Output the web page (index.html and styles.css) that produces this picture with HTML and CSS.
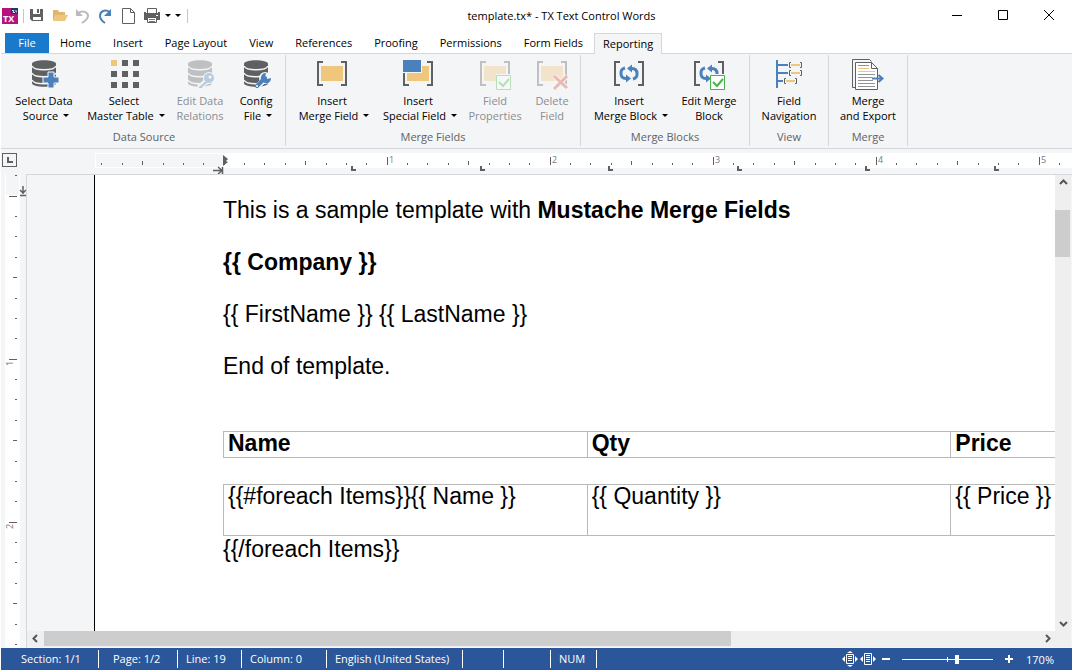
FILE: index.html
```html
<!DOCTYPE html>
<html lang="en">
<head>
    <meta charset="utf-8">
    <title>template.tx* - TX Text Control Words</title>
    <link rel="stylesheet" href="styles.css">
</head>
<body>
    <!-- shared icon parts -->
    <svg class="defs" width="0" height="0">
        <symbol id="database" viewBox="0 0 32 32">
            <path d="M4 5c0-5 24-5 24 0v19c0 5-24 5-24 0z" fill="#5f6062"/>
            <path d="M4 7c2 5 22 5 24 0M4 14c2 5 22 5 24 0M4 21c2 5 22 5 24 0" fill="none" stroke="#f4f5f7" stroke-width="1.4"/>
        </symbol>
        <symbol id="brackets" viewBox="0 0 32 32">
            <path d="M7 3H2v23h5M25 3h5v23h-5" fill="none" stroke="#5f6062" stroke-width="2"/>
        </symbol>
        <symbol id="cycle" viewBox="0 0 32 32">
            <path d="M12 9c-4 1-4 3-4 5.500s1 5 5 5M20 20c4-1 4-3 4-5.500s-1-5-5-5" fill="none" stroke="#4a80bb" stroke-width="3"/>
            <path d="M13 15.500v8l5-4zM19 5.500v8l-5-4z" fill="#4a80bb"/>
        </symbol>
    </svg>

    <div class="app">
        <header class="titlebar">
            <div class="quick-access">
                <svg class="app-icon" width="18" height="18" viewBox="0 0 18 18">
                    <path d="M1 1h10l6 6v10H1z" fill="#b5127d"/>
                    <path d="M10 1h7v6h-7z" fill="#24356b"/>
                    <path d="M11 3.500h2l-1 2h2M15 3v2h1" fill="none" stroke="#c9d3ea"/>
                    <text x="2" y="15" class="app-icon-text">TX</text>
                </svg>
                <span class="divider"></span>
                <button class="quick" aria-label="Save"><svg width="16" height="16" viewBox="0 0 16 16"><path d="M1 1h13v12H3l-2-2z" fill="#5f6062"/><path d="M4 1h7v5H4zM4 9h8v3H4z" fill="#fff"/><path d="M8 1h2v4H8z" fill="#5f6062"/></svg></button>
                <button class="quick" aria-label="Open"><svg width="16" height="16" viewBox="0 0 16 16"><path d="M1 13V2h5l1 2h6v3H4z" fill="#dfb66c"/><path d="M4 7h12l-3 6H1z" fill="#efc77c"/></svg></button>
                <button class="quick" aria-label="Undo"><svg width="16" height="16" viewBox="0 0 16 16"><path d="M3 5c5-3 10-1 10 3 0 3-3 5-6 7" fill="none" stroke="#b9bbbe" stroke-width="2"/><path d="M1 1v7h7z" fill="#b9bbbe"/></svg></button>
                <button class="quick" aria-label="Redo"><svg width="16" height="16" viewBox="0 0 16 16"><path d="M12 4C7 1 2 3 2 8c0 3 2 5 5 7" fill="none" stroke="#4a80bb" stroke-width="2"/><path d="M13 1v7H6z" fill="#4a80bb"/></svg></button>
                <button class="quick" aria-label="New"><svg width="16" height="16" viewBox="0 0 16 16"><path d="M1.500.5h8l4 4v11h-12zM9.500.5v4h4" fill="#fff" stroke="#5f6062"/></svg></button>
                <button class="quick" aria-label="Print"><svg width="16" height="16" viewBox="0 0 16 16"><path d="M3.500 5V.5h9V5" fill="#fff" stroke="#5f6062"/><path d="M0 4h2v1h12V4h2v8H0z" fill="#5f6062"/><path d="M12 7h2v1h-2z" fill="#fff"/><path d="M3.500 9.500h9v5h-9z" fill="#fff" stroke="#5f6062"/><path d="M5 11.500h6M5 13.500h6" stroke="#4a80bb"/></svg></button>
                <button class="quick-menu" aria-label="Print options"><span class="caret"></span></button>
                <button class="quick-menu" aria-label="Customize"><span class="caret"></span></button>
                <span class="divider"></span>
            </div>
            <div class="title">template.tx* - TX Text Control Words</div>
            <div class="window-buttons">
                <button aria-label="Minimize"><svg width="12" height="12" viewBox="0 0 12 12"><path d="M1 5.500h10" stroke="#000"/></svg></button>
                <button aria-label="Maximize"><svg width="12" height="12" viewBox="0 0 12 12"><path d="M1.500.5h9v9h-9z" fill="none" stroke="#000"/></svg></button>
                <button aria-label="Close"><svg width="12" height="12" viewBox="0 0 12 12"><path d="M1 0l10 10M11 0L1 10" stroke="#000"/></svg></button>
            </div>
        </header>

        <nav class="tabs">
            <button class="tab file">File</button>
            <button class="tab">Home</button>
            <button class="tab">Insert</button>
            <button class="tab">Page Layout</button>
            <button class="tab">View</button>
            <button class="tab">References</button>
            <button class="tab">Proofing</button>
            <button class="tab">Permissions</button>
            <button class="tab">Form Fields</button>
            <button class="tab active">Reporting</button>
        </nav>

        <div class="ribbon">
            <section class="group">
                <div class="commands">
                    <button class="command w-72">
                        <svg width="32" height="32" viewBox="0 0 32 32"><use href="#database"/><path d="M20 13h6v5h5v6h-5v5h-6v-5h-5v-6h5z" fill="#4a80bb" stroke="#f4f5f7"/></svg>
                        <span>Select Data</span><span class="more">Source<i class="caret"></i></span>
                    </button>
                    <button class="command w-88">
                        <svg width="32" height="32" viewBox="0 0 32 32"><path d="M3 1h6v6H3z" fill="#efc77c"/><path d="M14 1h6v6h-6zM25 1h6v6h-6zM3 12h6v6H3zM14 12h6v6h-6zM25 12h6v6h-6zM3 23h6v6H3zM14 23h6v6h-6zM25 23h6v6h-6z" fill="#5f6062"/></svg>
                        <span>Select</span><span class="more">Master Table<i class="caret"></i></span>
                    </button>
                    <button class="command w-64" disabled>
                        <svg width="32" height="32" viewBox="0 0 32 32"><use href="#database"/><path d="M24 21l-9 8" stroke="#f4f5f7" stroke-width="6"/><circle cx="25" cy="19" r="6" fill="#f4f5f7"/><path d="M23 21l-8 7v1h3l1-2 2-1 4-4" fill="#4a80bb"/><circle cx="25" cy="19" r="5" fill="#4a80bb"/><circle cx="26" cy="18" r="1.500" fill="#fff"/></svg>
                        <span>Edit Data</span><span>Relations</span>
                    </button>
                    <button class="command w-48">
                        <svg width="32" height="32" viewBox="0 0 32 32"><use href="#database"/><path d="M17 28l9-9" stroke="#f4f5f7" stroke-width="6"/><circle cx="25" cy="19" r="6" fill="#f4f5f7"/><path d="M17 27l8-8" stroke="#4a80bb" stroke-width="4" stroke-linecap="round"/><path d="M26 14l-1 4 2 2 4-1c0 4-3 6-6 5s-5-3-4-6 2-4 5-4z" fill="#4a80bb"/><circle cx="17" cy="27" r="1" fill="#fff"/></svg>
                        <span>Config</span><span class="more">File<i class="caret"></i></span>
                    </button>
                </div>
                <div class="group-label">Data Source</div>
            </section>

            <section class="group">
                <div class="commands">
                    <button class="command w-84">
                        <svg width="32" height="32" viewBox="0 0 32 32"><use href="#brackets"/><path d="M5 7h22v15H5z" fill="#efc77c"/></svg>
                        <span>Insert</span><span class="more">Merge Field<i class="caret"></i></span>
                    </button>
                    <button class="command w-88">
                        <svg width="32" height="32" viewBox="0 0 32 32"><use href="#brackets"/><path d="M5 7h22v15H5z" fill="#efc77c"/><path d="M0 0h20v14H0z" fill="#f4f5f7"/><path d="M1 1h18v12H1z" fill="#4a80bb"/></svg>
                        <span>Insert</span><span class="more">Special Field<i class="caret"></i></span>
                    </button>
                    <button class="command w-66" disabled>
                        <svg width="32" height="32" viewBox="0 0 32 32"><use href="#brackets"/><path d="M5 7h22v15H5z" fill="#efc77c"/><path d="M17 15h16v16H17z" fill="#f4f5f7"/><path d="M17.500 16.500h14v14h-14z" fill="#fff" stroke="#45b549"/><path d="M20 23l4 4 6-7" fill="none" stroke="#45b549" stroke-width="2"/></svg>
                        <span>Field</span><span>Properties</span>
                    </button>
                    <button class="command w-48" disabled>
                        <svg width="32" height="32" viewBox="0 0 32 32"><use href="#brackets"/><path d="M5 7h22v15H5z" fill="#efc77c"/><path d="M18 17l13 12M31 17L18 30" stroke="#f4f5f7" stroke-width="5"/><path d="M18 17l13 12M31 17L18 30" stroke="#dc4a38" stroke-width="3"/></svg>
                        <span>Delete</span><span>Field</span>
                    </button>
                </div>
                <div class="group-label">Merge Fields</div>
            </section>

            <section class="group">
                <div class="commands">
                    <button class="command w-88">
                        <svg width="32" height="32" viewBox="0 0 32 32"><use href="#brackets"/><use href="#cycle"/></svg>
                        <span>Insert</span><span class="more">Merge Block<i class="caret"></i></span>
                    </button>
                    <button class="command w-72">
                        <svg width="32" height="32" viewBox="0 0 32 32"><use href="#brackets"/><use href="#cycle"/><path d="M17 15h16v16H17z" fill="#f4f5f7"/><path d="M17.500 16.500h14v14h-14z" fill="#fff" stroke="#45b549"/><path d="M20 23l4 4 6-7" fill="none" stroke="#45b549" stroke-width="2"/></svg>
                        <span>Edit Merge</span><span>Block</span>
                    </button>
                </div>
                <div class="group-label">Merge Blocks</div>
            </section>

            <section class="group">
                <div class="commands">
                    <button class="command w-70">
                        <svg width="32" height="32" viewBox="0 0 32 32"><path d="M4 1v28M4 6h11M4 14h11M4 22h6" fill="none" stroke="#4a80bb" stroke-width="2"/><path d="M18 3.500h-1.500v5H18M27 3.500h1.500v5H27M18 11.500h-1.500v5H18M27 11.500h1.500v5H27M13 19.500h-1.500v5H13M22 19.500h1.500v5H22" fill="none" stroke="#5f6062"/><path d="M18 6h9M18 14h9M13 22h9" stroke="#efc77c" stroke-width="2"/></svg>
                        <span>Field</span><span>Navigation</span>
                    </button>
                </div>
                <div class="group-label">View</div>
            </section>

            <section class="group">
                <div class="commands">
                    <button class="command w-70">
                        <svg width="32" height="32" viewBox="0 0 32 32"><path d="M3 28.500H.5V.5h17l2 2" fill="none" stroke="#5f6062"/><path d="M3.500 3.500h16l6 6v21h-22z" fill="#fff" stroke="#5f6062"/><path d="M19.500 3.500v6h6" fill="none" stroke="#5f6062"/><path d="M6 6.500h11M6 15.500h17M6 18.500h14M6 21.500h15M6 24.500h17M6 27.500h17" stroke="#919294"/><path d="M6 9.500h11M6 12.500h17" stroke="#efc77c"/><path d="M20 19.500h10M26.500 16l4 3.500-4 3.500" fill="none" stroke="#4a80bb" stroke-width="2"/></svg>
                        <span>Merge</span><span>and Export</span>
                    </button>
                </div>
                <div class="group-label">Merge</div>
            </section>
        </div>

        <div class="ruler-row">
            <button class="tab-type" aria-label="Left tab"><svg width="6" height="6" viewBox="0 0 6 6"><path d="M1 0v5h5" fill="none" stroke="#5f6062" stroke-width="2"/></svg></button>
            <svg class="ruler-h" height="25" width="100%">
                <defs>
                    <pattern id="inch-h" x="129" y="0" width="163" height="25" patternUnits="userSpaceOnUse">
                        <path d="M.5 8v8M20.500 14v2M40.500 14v2M61.500 14v2M81.500 12v4M102.500 14v2M122.500 14v2M142.500 14v2" stroke="#5f6062"/>
                    </pattern>
                </defs>
                <rect x="0" y="4" width="100%" height="15" fill="#fff"/>
                <rect x="1" y="5" width="127" height="13" fill="#f4f5f7"/>
                <rect x="0" y="0" width="100%" height="25" fill="url(#inch-h)"/>
                <path d="M128 6l5 4-2 2 2 1-5 4z" fill="#5f6062"/>
                <path d="M118 21.500h8M123 18l4 3.500-4 3.500M127.500 18v7" fill="none" stroke="#5f6062" stroke-width="1.500"/>
                <g class="ruler-text"><text x="294" y="14">1</text><text x="457" y="14">2</text><text x="620" y="14">3</text><text x="783" y="14">4</text><text x="946" y="14">5</text></g>
                <path d="M257 17v4h4M386 17v4h4M514 17v4h4M643 17v4h4M771 17v4h4M900 17v4h4" fill="none" stroke="#5f6062" stroke-width="2"/>
            </svg>
        </div>

        <main class="workspace">
            <svg class="ruler-v" width="25" height="100%">
                <defs>
                    <pattern id="inch-v" x="0" y="22" width="25" height="163" patternUnits="userSpaceOnUse">
                        <path d="M8 .5h8M14 20.500h2M14 40.500h2M14 61.500h2M12 81.500h4M14 102.500h2M14 122.500h2M14 142.500h2" stroke="#5f6062"/>
                    </pattern>
                </defs>
                <rect x="4" y="0" width="15" height="100%" fill="#fff"/>
                <rect x="5" y="0" width="13" height="21" fill="#f4f5f7"/>
                <rect x="0" y="0" width="25" height="100%" fill="url(#inch-v)"/>
                <path d="M22 12v8M19 16l3 3 3-3M19 21.500h6" fill="none" stroke="#5f6062" stroke-width="1.500"/>
                <g class="ruler-text"><text transform="translate(12 192) rotate(-90)">1</text><text transform="translate(12 355) rotate(-90)">2</text></g>
            </svg>
            <div class="view">
                <div class="canvas">
                    <article class="page">
                        <p>This is a sample template with <b>Mustache Merge Fields</b></p>
                        <p><b>{{ Company }}</b></p>
                        <p>{{ FirstName }} {{ LastName }}</p>
                        <p>End of template.</p>
                        <table class="header-table">
                            <tr><th>Name</th><th>Qty</th><th>Price</th></tr>
                        </table>
                        <table class="item-table">
                            <tr><td>{{#foreach Items}}{{ Name }}</td><td>{{ Quantity }}</td><td>{{ Price }}</td></tr>
                        </table>
                        <p>{{/foreach Items}}</p>
                    </article>
                </div>
                <div class="scroll scroll-v">
                    <button aria-label="Scroll up"><svg width="9" height="9" viewBox="0 0 9 9"><path d="M1 6l3.500-3.500L8 6" fill="none" stroke="#55575a" stroke-width="2"/></svg></button>
                    <div class="track"><div class="thumb"></div></div>
                    <button aria-label="Scroll down"><svg width="9" height="9" viewBox="0 0 9 9"><path d="M1 3l3.500 3.500L8 3" fill="none" stroke="#55575a" stroke-width="2"/></svg></button>
                </div>
                <div class="scroll scroll-h">
                    <button aria-label="Scroll left"><svg width="9" height="9" viewBox="0 0 9 9"><path d="M6 1L2.500 4.500 6 8" fill="none" stroke="#55575a" stroke-width="2"/></svg></button>
                    <div class="track"><div class="thumb"></div></div>
                    <button aria-label="Scroll right"><svg width="9" height="9" viewBox="0 0 9 9"><path d="M3 1l3.500 3.500L3 8" fill="none" stroke="#55575a" stroke-width="2"/></svg></button>
                </div>
                <div class="scroll-corner"></div>
            </div>
        </main>

        <footer class="statusbar">
            <div class="cell section">Section: 1/1</div>
            <div class="cell page-count">Page: 1/2</div>
            <div class="cell">Line: 19</div>
            <div class="cell">Column: 0</div>
            <div class="cell">English (United States)</div>
            <div class="cell"></div>
            <div class="cell"></div>
            <div class="cell">NUM</div>
            <div class="zoom">
                <button aria-label="Whole page"><svg width="16" height="16" viewBox="0 0 16 16"><path d="M4.500 3.500h7v9h-7z" fill="none" stroke="#fff"/><path d="M6 5.500h4M6 7.500h4M6 9.500h4" stroke="#fff"/><path d="M8 0l3 2H5zM8 16l3-2H5zM0 8l3-3v6zM16 8l-3-3v6z" fill="#fff"/></svg></button>
                <button aria-label="Page width"><svg width="16" height="16" viewBox="0 0 16 16"><path d="M4.500 2.500h7v11h-7z" fill="none" stroke="#fff"/><path d="M6 4.500h4M6 6.500h4M6 8.500h4M6 10.500h4" stroke="#fff"/><path d="M0 8l3-3v6zM16 8l-3-3v6z" fill="#fff"/></svg></button>
                <button aria-label="Zoom out"><svg width="16" height="16" viewBox="0 0 16 16"><path d="M4 8h8" stroke="#fff" stroke-width="2"/></svg></button>
                <input type="range" class="zoom-slider" min="0" max="100" value="61" aria-label="Zoom">
                <button aria-label="Zoom in"><svg width="16" height="16" viewBox="0 0 16 16"><path d="M4 8h8M8 4v8" stroke="#fff" stroke-width="2"/></svg></button>
                <span class="zoom-value">170%</span>
            </div>
        </footer>
    </div>
</body>
</html>
```
FILE: styles.css
```css
* {
    box-sizing: border-box;
}
body {
    margin: 0;
    background: #fff;
    font-family: "Open Sans", "Segoe UI", sans-serif;
    font-size: 11px;
    color: #000;
}
button {
    padding: 0;
    border: none;
    background: none;
    font: inherit;
    color: inherit;
}
svg {
    display: block;
    overflow: visible;
}
.defs {
    position: absolute;
}
.app {
    display: flex;
    flex-direction: column;
    height: 100vh;
    padding-left: 1px;
    overflow: hidden;
}

/* title bar */
.titlebar {
    display: flex;
    align-items: center;
    height: 31px;
}
.quick-access {
    display: flex;
    align-items: center;
    flex-shrink: 0;
}
.app-icon-text {
    font-size: 9px;
    font-weight: bold;
    fill: #fff;
}
.divider {
    width: 1px;
    height: 14px;
    margin: 0 1px 0 4px;
    background: #c4c6c9;
}
.quick {
    width: 23px;
    display: flex;
    justify-content: center;
}
.quick-menu {
    width: 10px;
    display: flex;
    justify-content: center;
}
.caret {
    width: 0;
    height: 0;
    border: 3px solid transparent;
    border-top-color: #000;
    border-bottom: none;
}
.title {
    flex: 1;
    text-align: center;
}
.window-buttons {
    display: flex;
}
.window-buttons button {
    width: 46px;
    height: 30px;
    display: flex;
    align-items: center;
    justify-content: center;
}

/* ribbon tabs */
.tabs {
    display: flex;
    height: 23px;
    padding: 2px 4px 0;
    border-bottom: 1px solid #d5d7da;
    flex-shrink: 0;
}
.tab {
    height: 20px;
    padding: 0 11px 2px;
    flex-shrink: 0;
}
.tab.file {
    width: 44px;
    background: #1979ca;
    color: #fff;
}
.tab.active {
    height: 21px;
    padding: 0 8px 2px;
    background: #f4f5f7;
    border: 1px solid #d5d7da;
    border-bottom: none;
}

/* ribbon */
.ribbon {
    display: flex;
    height: 95px;
    background: #f4f5f7;
    border-bottom: 1px solid #d5d7da;
    flex-shrink: 0;
}
.group {
    display: flex;
    flex-direction: column;
    justify-content: space-between;
    margin: 1px 0 2px;
    padding: 4px 4px 0;
    border-right: 1px solid #d5d7da;
}
.group:first-child {
    padding-left: 7px;
    padding-right: 5px;
}
.commands {
    display: flex;
}
.command {
    display: flex;
    flex-direction: column;
    align-items: center;
    line-height: 15px;
    white-space: nowrap;
}
.command svg {
    margin-bottom: 2px;
}
.command:disabled {
    color: #8b8d90;
}
.command:disabled svg {
    opacity: 0.35;
}
.w-48 { width: 48px; }
.w-64 { width: 64px; }
.w-66 { width: 66px; }
.w-70 { width: 70px; }
.w-72 { width: 72px; }
.w-84 { width: 84px; }
.w-88 { width: 88px; }
.more {
    display: flex;
    align-items: center;
    gap: 5px;
    padding-left: 4px;
}
.group-label {
    line-height: 18px;
    text-align: center;
    color: #606266;
}

/* rulers */
.ruler-row {
    display: flex;
    height: 25px;
    background: #f4f5f7;
    flex-shrink: 0;
}
.tab-type {
    display: flex;
    align-items: center;
    justify-content: center;
    width: 15px;
    height: 14px;
    margin: 4px 78px 0 1px;
    border: 1px solid #5f6062;
    flex-shrink: 0;
}
.ruler-h {
    flex: 1;
    overflow: hidden;
}
.ruler-v {
    flex-shrink: 0;
    overflow: hidden;
}
.ruler-text {
    font-size: 9px;
    fill: #77797c;
}

/* document */
.workspace {
    display: flex;
    flex: 1;
    min-height: 0;
    background: #f4f5f7;
}
.view {
    display: grid;
    grid-template-columns: 1fr 16px;
    grid-template-rows: 1fr 16px;
    flex: 1;
    min-width: 0;
    padding: 0 1px 1px 0;
    border-top: 1px solid #d5d7da;
    border-left: 1px solid #d5d7da;
}
.canvas {
    min-width: 0;
    min-height: 0;
    padding-left: 67px;
    overflow: hidden;
}
.page {
    height: 100%;
    padding: 22px 0 0 128px;
    background: #fff;
    border-left: 1px solid #000;
    font-family: "Liberation Sans", Arial, sans-serif;
    font-size: 23px;
    line-height: 26px;
    white-space: nowrap;
}
.page p {
    margin: 0 0 26px;
}
.page table {
    width: 1092px;
    table-layout: fixed;
    border-collapse: collapse;
    line-height: 23px;
}
.page th,
.page td {
    padding: 0 4px;
    border: 1px solid #b9b9b9;
    text-align: left;
    vertical-align: top;
}
.header-table {
    margin: 52px 0 26px;
}
.header-table th {
    height: 26px;
}
.item-table td {
    height: 51px;
}

/* scroll bars */
.scroll {
    display: flex;
    background: #efefef;
}
.scroll button {
    display: flex;
    align-items: center;
    justify-content: center;
    width: 16px;
    height: 15px;
}
.scroll-v {
    flex-direction: column;
}
.track {
    flex: 1;
}
.thumb {
    background: #cdcdcd;
}
.scroll-v .thumb {
    width: 15px;
    height: 11%;
    margin-top: 20px;
}
.scroll-h .thumb {
    width: 69%;
    height: 15px;
    margin-left: 1px;
}
.scroll-corner {
    background: #efefef;
}

/* status bar */
.statusbar {
    display: grid;
    grid-template-columns: 98px 79px 64px 85px 136px 41px 47px 46px 1fr;
    align-items: center;
    height: 22px;
    background: #2b579a;
    color: #fff;
    flex-shrink: 0;
}
.cell {
    height: 18px;
    padding-left: 8px;
    line-height: 18px;
    border-right: 1px solid #fff;
    white-space: nowrap;
}
.cell.section {
    padding-left: 20px;
}
.cell.page-count {
    padding-left: 14px;
}
.zoom {
    display: flex;
    align-items: center;
    justify-content: flex-end;
    gap: 2px;
    padding-right: 18px;
}
.zoom-slider {
    appearance: none;
    width: 91px;
    height: 10px;
    margin: 0 6px;
    background:
        linear-gradient(#fff, #fff) 45px 3px / 1px 5px no-repeat,
        linear-gradient(#fff, #fff) 0 5px / 100% 1px no-repeat;
}
.zoom-slider::-webkit-slider-thumb {
    appearance: none;
    width: 4px;
    height: 9px;
    background: #fff;
}
.zoom-value {
    margin-left: 7px;
}
```
